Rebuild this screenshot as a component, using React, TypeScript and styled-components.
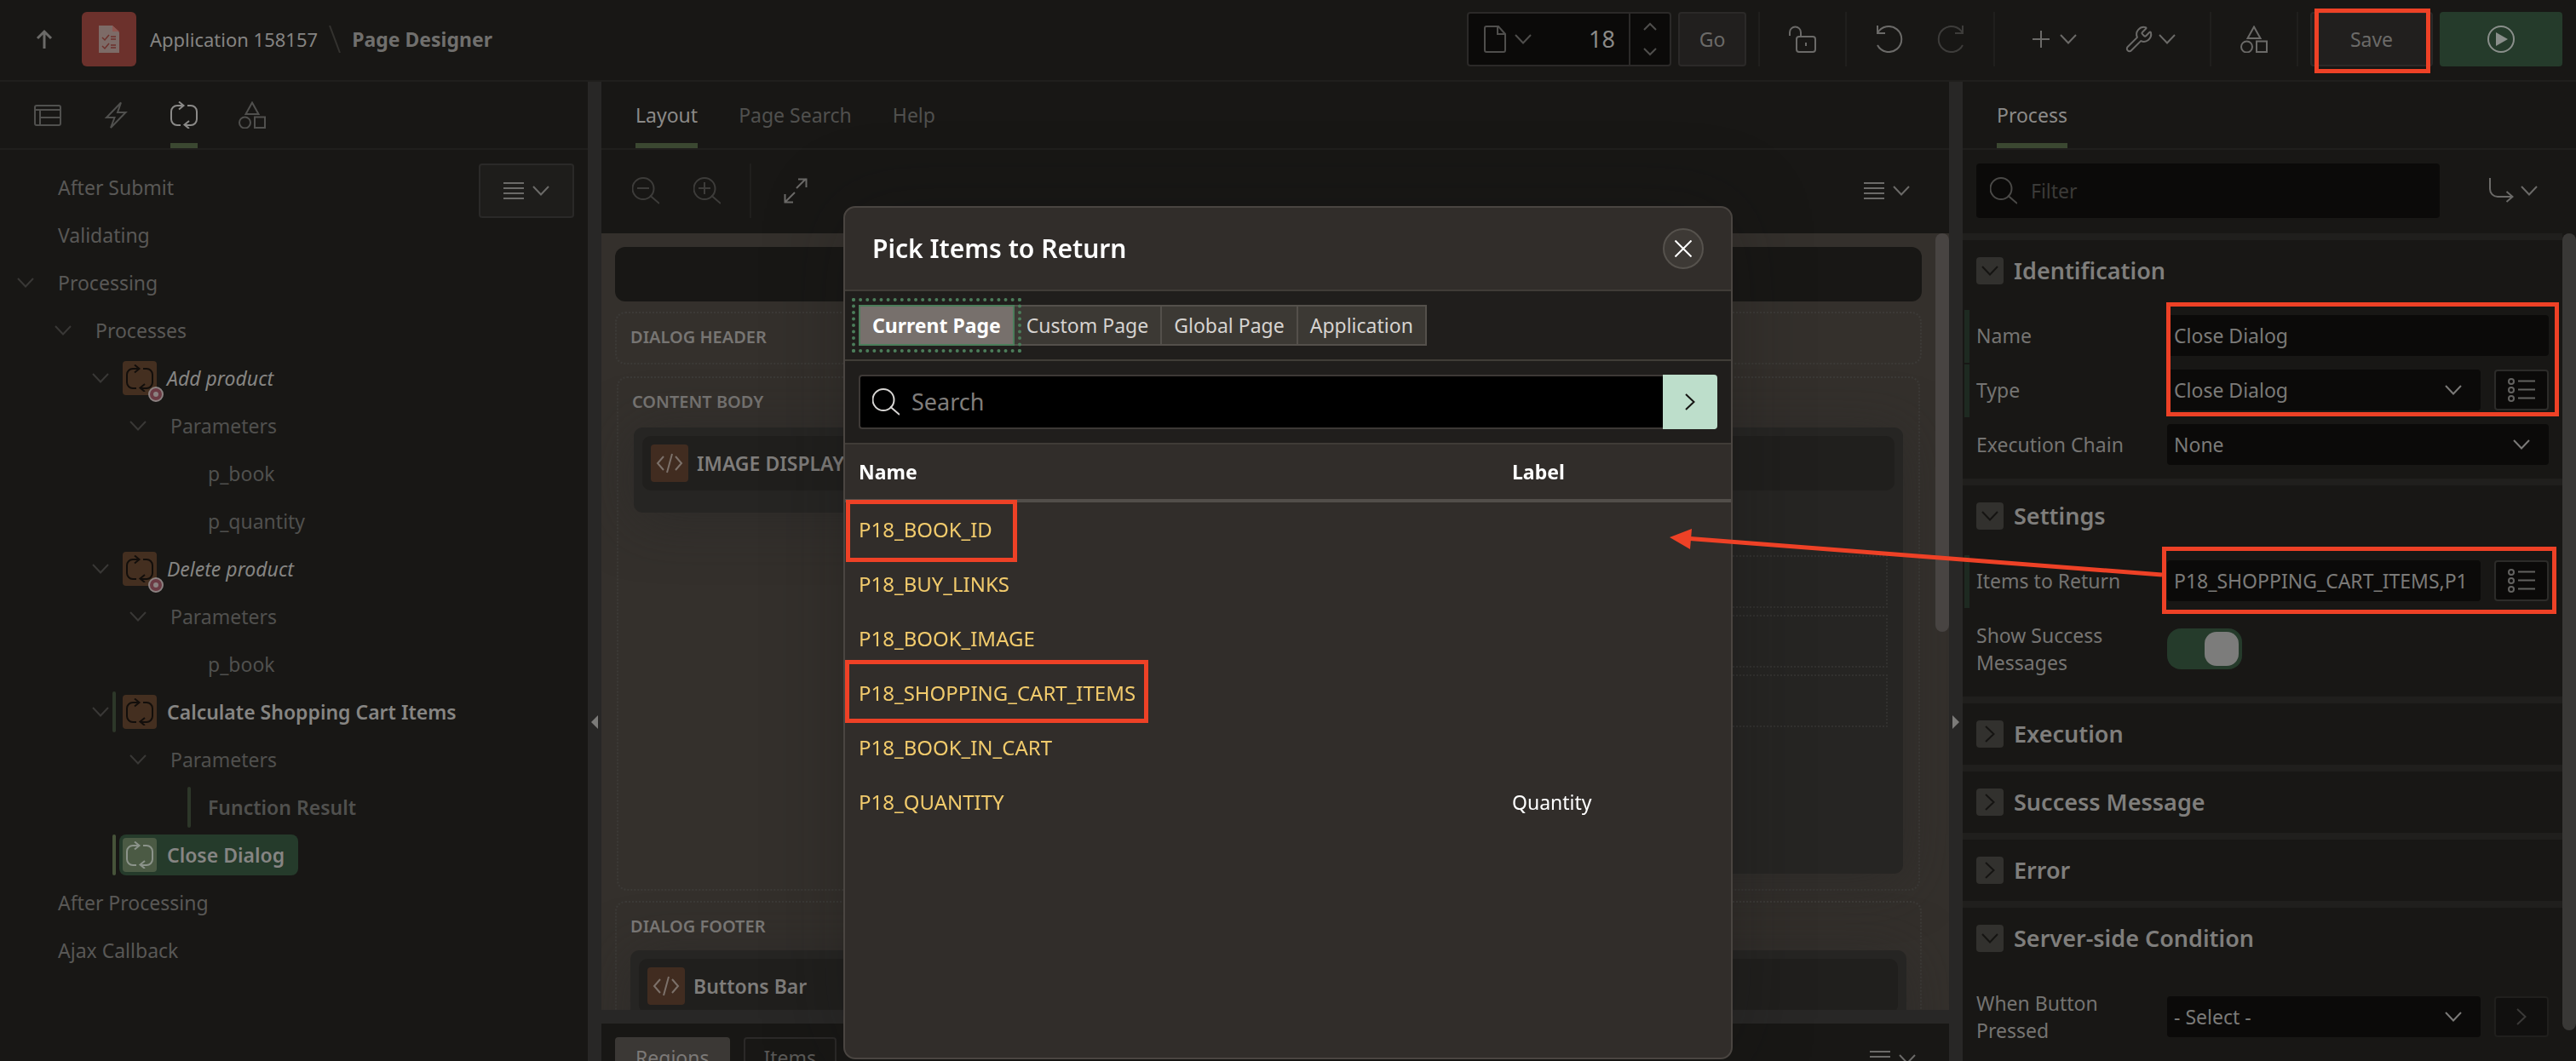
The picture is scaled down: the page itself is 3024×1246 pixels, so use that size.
import React from "react";
import styled, { createGlobalStyle, css } from "styled-components";
import { Wrench } from "lucide-react";

const c = {
  bg: "#181715",
  field: "#0b0a09",
  line: "#201f1d",
  raised: "#211f1e",
  border: "#2b2928",
  splitter: "#282726",
  canvas: "#34302c",
  text: "#858482",
  soft: "#6b6a68",
  dim: "#50504e",
  faint: "#3d3c3a",
  green: "#253b2b",
  tab: "#3b4831",
  bar: "#1e2a21",
  red: "#ee4126",
};

const Global = createGlobalStyle`
  *, *::before, *::after { box-sizing: border-box; }
  html, body { margin: 0; }
  body { background: ${c.bg}; overflow: hidden; }
  body, button, input, select {
    font-family: "Noto Sans", "Open Sans", sans-serif;
    font-size: 23px;
    line-height: 32px;
  }
  button, input, select { margin: 0; padding: 0; border: 0; background: none; color: inherit; }
  svg { display: block; flex: none; }
`;

/* ---------- icons ---------- */

type IconProps = { d: string; w?: number; h?: number; stroke?: number; children?: React.ReactNode };
const Icon = ({ d, w = 32, h = 32, stroke = 2, children }: IconProps) => (
  <svg width={w} height={h} viewBox={`0 0 ${w} ${h}`} fill="none" stroke="currentColor" strokeWidth={stroke} aria-hidden="true">
    <path d={d} />
    {children}
  </svg>
);
const Down = () => <Icon w={20} h={12} d="M1 1l9 9.5L19 1" />;
const Right = () => <Icon w={12} h={20} d="M1 1l9.5 9L1 19" />;
const SmallUp = () => <Icon w={16} h={10} d="M1 9l7-7 7 7" />;
const SmallDown = () => <Icon w={16} h={10} d="M1 1l7 7 7-7" />;
const Lines = () => <Icon w={24} h={20} d="M0 1h24M0 7h24M0 13h24M0 19h24" />;
const Search = () => <Icon d="M21 21.500L32 31"><circle cx="13" cy="13.500" r="12.500" /></Icon>;
const ZoomOut = () => <Icon d="M21 21.500L32 31M6 13h14"><circle cx="13" cy="13.500" r="12.500" /></Icon>;
const ZoomIn = () => <Icon d="M21 21.500L32 31M6 13h14M13 6v14"><circle cx="13" cy="13.500" r="12.500" /></Icon>;
const Expand = () => <Icon w={28} h={30} d="M15 12L26 1M17 1.500h9.500V11M13 17L2 28M1.500 19v9.500H11" />;
const Cycle = () => (
  <Icon d="M15 5H8a7 7 0 0 0-7 7v9a7 7 0 0 0 7 7h4M20 5h4a7 7 0 0 1 7 7v9a7 7 0 0 1-7 7h-7M10 0.500l5.500 4.500L10 9.500M22 23l-5.500 4.500L22 32" />
);
const Shapes = () => (
  <Icon d="M16 1.500L8.500 15h15zM19 18.500h12V31H19z"><circle cx="7.500" cy="25" r="6.500" /></Icon>
);
const Layout = () => <Icon h={26} d="M3 2h26a2 2 0 0 1 2 2v19a2 2 0 0 1-2 2H3a2 2 0 0 1-2-2V4a2 2 0 0 1 2-2zM1 7h30M7 7v18M7 16h24" />;
const Bolt = () => <Icon d="M22 1.500L5 19h9.500L10 31l17.500-18H18z" />;
const Up = () => <Icon w={20} h={24} stroke={3} d="M10 23V3M2 11l8-8 8 8" />;
const Lock = () => <Icon d="M1 12V8a6.500 6.500 0 0 1 13 0v5M12 13h16a3 3 0 0 1 3 3v12a3 3 0 0 1-3 3H12a3 3 0 0 1-3-3V16a3 3 0 0 1 3-3zM20 20v4" />;
const Undo = () => <Icon d="M2 0v9h9M2 9A15 15 0 1 1 2 23" />;
const Redo = () => <Icon d="M30 0v9h-9M30 9A15 15 0 1 0 30 23" />;
const Plus = () => <Icon w={20} h={20} d="M0 10h20M10 0v20" />;
const PageIcon = () => <Icon w={26} h={32} d="M3 1h14l8 9v19a2 2 0 0 1-2 2H3a2 2 0 0 1-2-2V3a2 2 0 0 1 2-2zM16 1v9h9" />;
const Play = () => (
  <Icon d="M16 1a15 15 0 1 1 0 30a15 15 0 1 1 0-30z"><path d="M10 8l14 8-14 8z" fill="currentColor" stroke="none" /></Icon>
);
const Branch = () => <Icon w={30} h={32} d="M2 1v13a9 9 0 0 0 9 9h17M21.500 17l7 6-7 6" />;
const List = () => (
  <Icon w={32} h={28} d="M12 3.500h20M12 13.500h20M12 23.500h20">
    <circle cx="4" cy="4" r="3" /><circle cx="4" cy="14" r="3" /><circle cx="4" cy="24" r="3" />
  </Icon>
);
const Code = () => <Icon w={32} h={24} d="M9 4L2 12l7 8M19 1l-6 22M23 4l7 8-7 8" />;
const Cross = () => <Icon w={20} h={20} d="M0.500 0.500l19 19M19.500 0.500l-19 19" />;
const Checklist = () => (
  <svg width="24" height="32" viewBox="0 0 24 32" aria-hidden="true">
    <path d="M0 0h16l8 8v24H0z" fill="#7d6b67" />
    <path d="M16 0v7h8" fill="#8f5650" />
    <path d="M4 14l3 3 5-6M14 13h6M14 16h6M4 24l3 3 5-6M14 23h6M14 26h6" fill="none" stroke="#6c312c" strokeWidth="1.500" />
  </svg>
);

/* ---------- shell ---------- */

const Page = styled.div`
  height: 100vh;
  display: grid;
  grid-template-rows: 96px minmax(0, 1fr);
  overflow: hidden;
  background: ${c.bg};
  color: ${c.text};
`;
const TopBar = styled.header`
  display: flex;
  align-items: center;
  justify-content: space-between;
  padding: 0 16px 2px 42px;
  border-bottom: 2px solid ${c.line};
`;
const Group = styled.div<{ $gap?: number }>`
  display: flex;
  align-items: center;
  gap: ${(p) => p.$gap ?? 0}px;
`;
const AppTile = styled.span`
  display: grid;
  place-items: center;
  width: 64px;
  height: 64px;
  margin-left: 34px;
  border-radius: 6px;
  background: #6c312c;
`;
const Crumb = styled.a`
  margin-left: 16px;
  font-size: 22px;
  color: ${c.text};
  text-decoration: none;
`;
const Slash = styled.span`
  margin: 0 13px;
  color: #33322f;
`;
const Current = styled.strong`
  color: #706f6d;
`;
const Ghost = styled.button<{ $w?: number; $off?: boolean; $gap?: number }>`
  display: flex;
  align-items: center;
  justify-content: center;
  gap: ${(p) => p.$gap ?? 12}px;
  width: ${(p) => p.$w ?? 72}px;
  height: 64px;
  color: ${(p) => (p.$off ? c.faint : c.soft)};
`;
const Solid = styled.button<{ $w: number; $green?: boolean }>`
  display: grid;
  place-items: center;
  width: ${(p) => p.$w}px;
  height: 64px;
  border-radius: 4px;
  border: 2px solid ${(p) => (p.$green ? c.green : c.border)};
  background: ${(p) => (p.$green ? c.green : c.raised)};
  color: ${(p) => (p.$green ? "#8a8f8b" : c.soft)};
`;
const Sep = styled.span`
  width: 2px;
  height: 64px;
  margin: 0 14px;
  background: ${c.line};
`;
const PageField = styled.div`
  display: flex;
  width: 240px;
  height: 64px;
  margin-right: 8px;
  border: 2px solid ${c.border};
  border-radius: 4px;
  background: ${c.field};
`;
const PageMenu = styled.button`
  display: flex;
  align-items: center;
  gap: 10px;
  padding-left: 18px;
  color: #4f4e4c;
`;
const PageInput = styled.input`
  flex: 1;
  min-width: 0;
  padding-right: 16px;
  text-align: right;
  font-size: 27px;
  color: #8b8a88;
`;
const Spin = styled.div`
  display: grid;
  width: 48px;
  border-left: 2px solid ${c.border};
  color: #4f4e4c;
  button { display: grid; place-items: center; }
`;

const Body = styled.main`
  display: grid;
  grid-template-columns: 690px 16px minmax(0, 1fr) 16px 720px;
  min-height: 0;
`;
const Splitter = styled.div`
  display: flex;
  align-items: center;
  justify-content: center;
  padding-top: 354px;
  height: 100%;
  background: ${c.splitter};
`;
const Handle = styled.button`
  color: #7c7b79;
`;
const SplitBar = ({ left, label }: { left?: boolean; label: string }) => (
  <Splitter>
    <Handle aria-label={label}>
      <svg width="8" height="16" viewBox="0 0 8 16" aria-hidden="true">
        <path d={left ? "M8 0v16L0 8z" : "M0 0v16l8-8z"} fill="currentColor" />
      </svg>
    </Handle>
  </Splitter>
);
const Pane = styled.section`
  display: flex;
  flex-direction: column;
  min-width: 0;
  min-height: 0;
`;
const Tabs = styled.nav`
  display: flex;
  flex: none;
  gap: 48px;
  height: 80px;
  padding: 0 40px;
  border-bottom: 2px solid ${c.line};
`;
const Tab = styled.button<{ $on?: boolean }>`
  display: flex;
  align-items: center;
  border-top: 6px solid transparent;
  border-bottom: 6px solid ${(p) => (p.$on ? c.tab : "transparent")};
  color: ${(p) => (p.$on ? "#8b8a88" : c.dim)};
`;

/* ---------- process tree ---------- */

const TreeArea = styled.div`
  position: relative;
  padding-top: 16px;
`;
const TreeMenu = styled.button`
  position: absolute;
  top: 16px;
  right: 16px;
  display: flex;
  align-items: center;
  justify-content: center;
  gap: 10px;
  width: 112px;
  height: 64px;
  border: 2px solid #2a2928;
  border-radius: 4px;
  background: #1e1d1b;
  color: ${c.soft};
`;
const TreeList = styled.ul`
  margin: 0;
  padding: 0;
  list-style: none;
`;
const TreeRow = styled.li<{ $level: number }>`
  display: flex;
  align-items: center;
  height: 56px;
  padding-left: ${(p) => p.$level * 44 + 20}px;
`;
const Toggle = styled.button`
  width: 36px;
  height: 32px;
  display: flex;
  align-items: center;
  color: #393836;
`;
const ChangeBar = styled.span<{ $on?: boolean; $bright?: boolean }>`
  width: 4px;
  height: 48px;
  margin-left: -12px;
  margin-right: 4px;
  border-radius: 2px;
  background: ${(p) => (p.$on ? (p.$bright ? "#465339" : "#2d3729") : "transparent")};
`;
const Node = styled.span<{ $tone?: "param" | "process" | "selected"; $italic?: boolean; $bold?: boolean }>`
  display: flex;
  align-items: center;
  gap: 12px;
  height: 48px;
  padding: 0 16px 0 ${(p) => (p.$tone === "process" || p.$tone === "selected" ? 4 : 16)}px;
  border-radius: 8px;
  white-space: nowrap;
  color: ${(p) => (p.$tone === "process" || p.$tone === "selected" ? "#868583" : p.$tone === "param" ? "#50504e" : "#595856")};
  ${(p) => p.$italic && css`font-style: italic;`}
  ${(p) => p.$bold && css`font-weight: 600;`}
  ${(p) => p.$tone === "selected" && css`background: ${c.green};`}
`;
const NodeIcon = styled.span<{ $sel?: boolean }>`
  position: relative;
  display: grid;
  place-items: center;
  width: 40px;
  height: 40px;
  border-radius: 4px;
  background: ${(p) => (p.$sel ? "#4b5a44" : "#442f20")};
  color: ${(p) => (p.$sel ? "#8b938a" : "#120e0b")};
`;
const Badge = styled.span`
  position: absolute;
  right: -8px;
  bottom: -8px;
  display: grid;
  place-items: center;
  width: 18px;
  height: 18px;
  border-radius: 50%;
  border: 2px solid #8b8180;
  background: #6b3a43;
  &::after { content: ""; width: 6px; height: 6px; border-radius: 50%; background: #8b8180; }
`;

type TreeItem = { label: string; level: number; open?: boolean; tone?: "param" | "process" | "selected"; badge?: boolean; bold?: boolean; changed?: boolean };
const tree: TreeItem[] = [
  { label: "After Submit", level: 0 },
  { label: "Validating", level: 0 },
  { label: "Processing", level: 0, open: true },
  { label: "Processes", level: 1, open: true },
  { label: "Add product", level: 2, open: true, tone: "process", badge: true },
  { label: "Parameters", level: 3, open: true, tone: "param" },
  { label: "p_book", level: 4, tone: "param" },
  { label: "p_quantity", level: 4, tone: "param" },
  { label: "Delete product", level: 2, open: true, tone: "process", badge: true },
  { label: "Parameters", level: 3, open: true, tone: "param" },
  { label: "p_book", level: 4, tone: "param" },
  { label: "Calculate Shopping Cart Items", level: 2, open: true, tone: "process", bold: true, changed: true },
  { label: "Parameters", level: 3, open: true, tone: "param" },
  { label: "Function Result", level: 4, tone: "param", bold: true, changed: true },
  { label: "Close Dialog", level: 2, tone: "selected", bold: true, changed: true },
  { label: "After Processing", level: 0 },
  { label: "Ajax Callback", level: 0 },
];

const Tree = () => (
  <TreeArea>
    <TreeList>
      {tree.map((n, i) => (
        <TreeRow key={i} $level={n.level}>
          <Toggle as={n.open ? "button" : "span"} aria-label={n.open ? `Collapse ${n.label}` : undefined}>{n.open && <Down />}</Toggle>
          <ChangeBar $on={n.changed} $bright={n.tone === "selected"} />
          <Node $tone={n.tone} $italic={n.badge} $bold={n.bold}>
            {(n.tone === "process" || n.tone === "selected") && (
              <NodeIcon $sel={n.tone === "selected"}><Cycle />{n.badge && <Badge />}</NodeIcon>
            )}
            {n.label}
          </Node>
        </TreeRow>
      ))}
    </TreeList>
    <TreeMenu aria-label="Tree menu"><Lines /><Down /></TreeMenu>
  </TreeArea>
);

/* ---------- layout canvas ---------- */

const Tools = styled.div`
  display: flex;
  flex: none;
  align-items: center;
  height: 98px;
  padding: 0 46px 2px 36px;
  color: ${c.soft};
`;
const Tool = styled.button<{ $dim?: boolean; $w?: number }>`
  display: flex;
  align-items: center;
  justify-content: flex-start;
  width: ${(p) => p.$w ?? 72}px;
  color: ${(p) => (p.$dim ? c.faint : c.soft)};
`;
const ToolSep = styled.span`
  width: 2px;
  height: 64px;
  margin-right: 38px;
  background: ${c.line};
`;
const MenuTool = styled.button`
  display: flex;
  align-items: center;
  gap: 10px;
  margin-left: auto;
  color: ${c.soft};
`;
const CanvasWrap = styled.div`
  display: flex;
  flex: 1;
  min-height: 0;
  overflow: hidden;
  background: ${c.canvas};
`;
const Canvas = styled.div`
  display: flex;
  flex-direction: column;
  flex: 1;
  min-width: 0;
  padding: 16px 16px 0;
`;
const Scroller = styled.div<{ $h: number; $color: string }>`
  flex: none;
  width: 16px;
  height: ${(p) => p.$h}px;
  border-radius: 8px;
  background: ${(p) => p.$color};
`;
const PageStrip = styled.div`
  flex: none;
  height: 64px;
  border-radius: 12px;
  background: ${c.bg};
`;
const Slot = styled.section<{ $h: number; $inset?: boolean }>`
  flex: none;
  height: ${(p) => p.$h}px;
  margin: ${(p) => (p.$inset ? "14px 2px 0" : "12px 0 0")};
  padding: 12px 16px 0;
  border: 2px dotted #3c3a37;
  border-radius: 12px;
`;
const SlotTitle = styled.h3`
  margin: 0;
  font-size: 20px;
  line-height: 32px;
  font-weight: 600;
  color: #777573;
`;
const Cards = styled.div`
  display: grid;
  grid-template-columns: 1fr 1fr;
  align-items: start;
  gap: 16px;
  margin: 14px 2px 0;
`;
const Card = styled.div<{ $h: number }>`
  height: ${(p) => p.$h}px;
  padding: 10px 10px 0;
  border-radius: 10px;
  background: #262523;
  box-shadow: 0 8px 64px rgba(38, 38, 37, 0.5);
`;
const CardHead = styled.div`
  display: flex;
  align-items: center;
  gap: 10px;
  height: 64px;
  padding: 0 10px;
  border-radius: 10px;
  background: #201f1d;
  font-weight: 600;
  color: #7f7d7b;
`;
const CodeTile = styled.span`
  display: grid;
  place-items: center;
  width: 44px;
  height: 44px;
  border-radius: 4px;
  background: #412c20;
  color: #7c716a;
`;
const DropZones = styled.div`
  display: grid;
  gap: 8px;
  margin: 76px 8px 0 0;
`;
const DropZone = styled.div`
  height: 62px;
  border: 2px dotted #32312f;
`;
const FootCard = styled(Card)`
  margin-top: 12px;
`;
const Gallery = styled.div`
  display: flex;
  flex: none;
  align-items: flex-start;
  height: 44px;
  padding: 16px 39px 0 16px;
  overflow: hidden;
  gap: 16px;
`;
const GalleryMenu = styled(MenuTool)`
  margin-top: 16px;
`;
const HSplit = styled.div`
  flex: none;
  height: 16px;
  background: ${c.splitter};
`;
const GalleryTab = styled.button<{ $on?: boolean }>`
  height: 48px;
  padding: 0 22px;
  border: 2px solid ${(p) => (p.$on ? "#3b3835" : c.border)};
  border-radius: 4px 4px 0 0;
  background: ${(p) => (p.$on ? "#3b3835" : c.bg)};
  color: ${(p) => (p.$on ? "#7b7977" : "#5a5957")};
`;

/* ---------- property editor ---------- */

const FilterRow = styled.div`
  display: flex;
  flex: none;
  align-items: center;
  gap: 30px;
  height: 98px;
  padding: 0 16px 2px;
`;
const FilterBox = styled.label`
  display: flex;
  align-items: center;
  gap: 16px;
  width: 544px;
  height: 64px;
  padding: 0 16px;
  border-radius: 4px;
  background: ${c.field};
  color: #4a4947;
`;
const FilterInput = styled.input`
  flex: 1;
  min-width: 0;
  &::placeholder { color: #3b3a38; opacity: 1; }
`;
const PropsBody = styled.div`
  display: flex;
  flex: 1;
  min-height: 0;
`;
const PropsList = styled.div`
  flex: 1;
  min-width: 0;
`;
const SectionBox = styled.section<{ $open?: boolean }>`
  border-top: 8px solid ${c.line};
  padding-bottom: ${(p) => (p.$open ? 8 : 0)}px;
`;
const SectionHead = styled.h2<{ $open?: boolean }>`
  display: flex;
  align-items: center;
  gap: 12px;
  height: ${(p) => (p.$open ? 80 : 72)}px;
  margin: 0;
  padding: 0 16px ${(p) => (p.$open ? 8 : 0)}px;
  font-size: 27px;
  font-weight: 600;
  color: #7f7e7c;
`;
const SectionToggle = styled.button`
  display: grid;
  place-items: center;
  width: 32px;
  height: 32px;
  border-radius: 4px;
  background: #32312e;
  color: #151412;
`;
const PropGroup = styled.div`
  position: relative;
`;
const PropRow = styled.div<{ $changed?: boolean; $tall?: boolean }>`
  display: grid;
  grid-template-columns: 224px minmax(0, 1fr) auto;
  align-items: center;
  min-height: ${(p) => (p.$tall ? 96 : 64)}px;
  padding: 0 16px 0 8px;
  border-left: 8px solid transparent;
  ${(p) =>
    p.$changed &&
    css`
      background: linear-gradient(${c.bar}, ${c.bar}) -6px 2px / 6px 62px no-repeat border-box;
      background-origin: padding-box;
    `}
`;
const PropLabel = styled.label`
  color: #757472;
  white-space: nowrap;
`;
const WrapLabel = styled(PropLabel)`
  padding-right: 60px;
  white-space: normal;
`;
const TextField = styled.input`
  width: 100%;
  height: 48px;
  padding: 0 8px;
  border-radius: 4px;
  background: ${c.field};
  color: #7b7a78;
`;
const SelectBox = styled.div`
  position: relative;
  color: #7b7a78;
  svg { position: absolute; right: 22px; top: 18px; pointer-events: none; }
`;
const SelectField = styled.select`
  width: 100%;
  height: 48px;
  padding: 0 8px;
  border-radius: 4px;
  background: ${c.field};
  appearance: none;
`;
const SideButton = styled.button<{ $off?: boolean }>`
  display: grid;
  place-items: center;
  width: 64px;
  height: 48px;
  margin-left: 16px;
  border: 2px solid ${(p) => (p.$off ? "#201f1d" : "#2c2b29")};
  border-radius: 4px;
  background: ${(p) => (p.$off ? "#11100f" : c.field)};
  color: ${(p) => (p.$off ? "#3b3a38" : "#636260")};
`;
const Switch = styled.input`
  appearance: none;
  justify-self: start;
  width: 88px;
  height: 48px;
  padding: 4px;
  border-radius: 16px;
  background: ${c.green};
  &::before {
    content: "";
    display: block;
    width: 40px;
    height: 40px;
    margin-left: 40px;
    border-radius: 14px;
    background: #7c7c7b;
  }
`;

/* ---------- callouts ---------- */

const Callout = styled.span<{ $t: number; $r: number; $b: number; $l: number }>`
  position: absolute;
  top: ${(p) => p.$t}px;
  right: ${(p) => p.$r}px;
  bottom: ${(p) => p.$b}px;
  left: ${(p) => p.$l}px;
  border: 5px solid ${c.red};
  pointer-events: none;
`;
const Anchor = styled.div`
  position: relative;
`;
const ArrowLayer = styled.svg`
  position: absolute;
  z-index: 30;
  top: -30px;
  right: 470px;
  pointer-events: none;
`;

/* ---------- dialog ---------- */

const Overlay = styled.div`
  position: fixed;
  inset: 0;
  z-index: 20;
  display: flex;
  justify-content: center;
  padding: 242px 0 2px;
`;
const Dialog = styled.div`
  display: flex;
  flex-direction: column;
  width: 1044px;
  border: 2px solid #4a4541;
  border-radius: 14px;
  background: #312d2a;
  box-shadow: 0 0 96px rgba(20, 20, 20, 0.3);
  color: #fff;
`;
const DialogHead = styled.div`
  display: flex;
  align-items: center;
  justify-content: space-between;
  height: 98px;
  padding: 0 32px;
  border-bottom: 2px solid #403c37;
`;
const DialogTitle = styled.h1`
  margin: 0;
  font-size: 30px;
  line-height: 40px;
  font-weight: 600;
`;
const Close = styled.button`
  display: grid;
  place-items: center;
  width: 48px;
  height: 48px;
  border: 2px solid #56524d;
  border-radius: 50%;
  background: #3d3935;
`;
const Scope = styled.div`
  display: flex;
  height: 82px;
  padding: 16px;
  border-bottom: 2px solid #403d37;
  background: #201e1c;
`;
const ScopeTab = styled.button<{ $on?: boolean }>`
  height: 48px;
  padding: 0 14px;
  border: 2px solid #54504b;
  border-left-width: 0;
  background: #3c3934;
  color: #d6d3d0;
  ${(p) =>
    p.$on &&
    css`
      border: 2px solid #4b7d5a;
      background: #77706c;
      color: #fff;
      font-weight: 700;
      outline: 4px dotted #4b7d5a;
      outline-offset: 4px;
      z-index: 1;
    `}
`;
const SearchRow = styled.div`
  display: flex;
  height: 98px;
  padding: 16px;
  border-bottom: 2px solid #403c37;
  background: #201e1c;
`;
const SearchBox = styled.label`
  display: flex;
  flex: 1;
  align-items: center;
  gap: 14px;
  height: 64px;
  padding: 0 14px;
  border: 2px solid #3d3936;
  border-right: 0;
  border-radius: 4px 0 0 4px;
  background: #000;
  color: #d9d7d5;
`;
const SearchInput = styled.input`
  flex: 1;
  font-size: 27px;
  &::placeholder { color: #807e7c; opacity: 1; }
`;
const Go = styled.button`
  display: grid;
  place-items: center;
  width: 64px;
  height: 64px;
  border-radius: 0 4px 4px 0;
  background: #bddecb;
  color: #161513;
`;
const Table = styled.table`
  width: 100%;
  border-collapse: separate;
  border-spacing: 0;
  table-layout: fixed;
  th, td { height: 64px; padding: 0 16px; text-align: left; }
  th { height: 68px; font-weight: 700; border-bottom: 4px solid #524e4a; }
  th:first-child { width: 767px; }
`;
const ItemLink = styled.a`
  font-size: 24px;
  color: #f2cb6c;
  text-decoration: none;
`;

const items: { name: string; label?: string; mark?: [number, number, number, number] }[] = [
  { name: "P18_BOOK_ID", mark: [-3, 565, -6, 1] },
  { name: "P18_BUY_LINKS" },
  { name: "P18_BOOK_IMAGE" },
  { name: "P18_SHOPPING_CART_ITEMS", mark: [-7, 411, -3, 0] },
  { name: "P18_BOOK_IN_CART" },
  { name: "P18_QUANTITY", label: "Quantity" },
];
const NameCell = styled.td`
  position: relative;
`;

const PickDialog = () => (
  <Overlay>
    <Dialog role="dialog" aria-labelledby="pick-title">
      <DialogHead>
        <DialogTitle id="pick-title">Pick Items to Return</DialogTitle>
        <Close aria-label="Close"><Cross /></Close>
      </DialogHead>
      <Scope>
        <ScopeTab $on>Current Page</ScopeTab>
        <ScopeTab>Custom Page</ScopeTab>
        <ScopeTab>Global Page</ScopeTab>
        <ScopeTab>Application</ScopeTab>
      </Scope>
      <SearchRow>
        <SearchBox><Search /><SearchInput aria-label="Search" placeholder="Search" /></SearchBox>
        <Go aria-label="Search"><Right /></Go>
      </SearchRow>
      <Table>
        <thead><tr><th>Name</th><th>Label</th></tr></thead>
        <tbody>
          {items.map((r) => (
            <tr key={r.name}>
              <NameCell>
                <ItemLink href="#">{r.name}</ItemLink>
                {r.mark && <Callout $t={r.mark[0]} $r={r.mark[1]} $b={r.mark[2]} $l={r.mark[3]} />}
              </NameCell>
              <td>{r.label}</td>
            </tr>
          ))}
        </tbody>
      </Table>
    </Dialog>
  </Overlay>
);

const Section = ({ title, open, children }: { title: string; open?: boolean; children?: React.ReactNode }) => (
  <SectionBox $open={open}>
    <SectionHead $open={open}>
      <SectionToggle aria-label={`Toggle ${title}`}>{open ? <Down /> : <Right />}</SectionToggle>
      {title}
    </SectionHead>
    {children}
  </SectionBox>
);

const Select = ({ id, value }: { id: string; value: string }) => (
  <SelectBox>
    <SelectField id={id} defaultValue={value}><option>{value}</option></SelectField>
    <Down />
  </SelectBox>
);

export default function App() {
  return (
    <>
      <Global />
      <Page>
        <TopBar>
          <Group>
            <Ghost as="a" href="#" $w={20} aria-label="Up"><Up /></Ghost>
            <AppTile><Checklist /></AppTile>
            <Crumb href="#">Application 158157</Crumb>
            <Slash><Icon w={14} h={32} d="M1 0l12 32" /></Slash>
            <Current>Page Designer</Current>
          </Group>
          <Group>
            <PageField>
              <PageMenu aria-label="Page finder"><PageIcon /><Down /></PageMenu>
              <PageInput aria-label="Page number" defaultValue="18" />
              <Spin>
                <button aria-label="Next page"><SmallUp /></button>
                <button aria-label="Previous page"><SmallDown /></button>
              </Spin>
            </PageField>
            <Solid $w={80}>Go</Solid>
            <Sep />
            <Ghost aria-label="Lock"><Lock /></Ghost>
            <Sep />
            <Ghost aria-label="Undo"><Undo /></Ghost>
            <Ghost aria-label="Redo" $off><Redo /></Ghost>
            <Sep />
            <Ghost $w={112} aria-label="Create"><Plus /><Down /></Ghost>
            <Ghost $w={112} $gap={6} aria-label="Utilities"><Wrench size={34} strokeWidth={1.4} /><Down /></Ghost>
            <Sep />
            <Ghost aria-label="Shared components"><Shapes /></Ghost>
            <Sep />
            <Group $gap={8}>
              <Anchor>
                <Solid $w={144}>Save</Solid>
                <Callout $t={-4} $r={3} $b={-8} $l={5} />
              </Anchor>
              <Solid $w={144} $green aria-label="Save and run"><Play /></Solid>
            </Group>
          </Group>
        </TopBar>
        <Body>
          <Pane>
            <Tabs>
              <Tab aria-label="Rendering"><Layout /></Tab>
              <Tab aria-label="Dynamic actions"><Bolt /></Tab>
              <Tab aria-label="Processing" $on><Cycle /></Tab>
              <Tab aria-label="Shared components"><Shapes /></Tab>
            </Tabs>
            <Tree />
          </Pane>
          <SplitBar left label="Collapse left pane" />
          <Pane>
            <Tabs>
              <Tab $on>Layout</Tab>
              <Tab>Page Search</Tab>
              <Tab>Help</Tab>
            </Tabs>
            <Tools>
              <Tool $dim aria-label="Zoom out"><ZoomOut /></Tool>
              <Tool $dim $w={66} aria-label="Zoom in"><ZoomIn /></Tool>
              <ToolSep />
              <Tool aria-label="Expand"><Expand /></Tool>
              <MenuTool aria-label="Layout menu"><Lines /><Down /></MenuTool>
            </Tools>
            <CanvasWrap>
              <Canvas>
                <PageStrip />
                <Slot $h={62}><SlotTitle>DIALOG HEADER</SlotTitle></Slot>
                <Slot $h={604} $inset>
                  <SlotTitle>CONTENT BODY</SlotTitle>
                  <Cards>
                    <Card $h={100}><CardHead><CodeTile><Code /></CodeTile>IMAGE DISPLAY</CardHead></Card>
                    <Card $h={524}>
                      <CardHead />
                      <DropZones><DropZone /><DropZone /><DropZone /></DropZones>
                    </Card>
                  </Cards>
                </Slot>
                <Slot $h={200}>
                  <SlotTitle>DIALOG FOOTER</SlotTitle>
                  <FootCard $h={140}><CardHead><CodeTile><Code /></CodeTile>Buttons Bar</CardHead></FootCard>
                </Slot>
              </Canvas>
              <Scroller $h={468} $color="#484442" />
            </CanvasWrap>
            <HSplit />
            <Gallery>
              <GalleryTab $on>Regions</GalleryTab>
              <GalleryTab>Items</GalleryTab>
              <GalleryMenu aria-label="Gallery menu"><Lines /><Down /></GalleryMenu>
            </Gallery>
          </Pane>
          <SplitBar label="Collapse right pane" />
          <Pane>
            <Tabs><Tab $on>Process</Tab></Tabs>
            <FilterRow>
              <FilterBox><Search /><FilterInput aria-label="Filter" placeholder="Filter" /></FilterBox>
              <Ghost $w={112} $gap={8} aria-label="Go to group"><Branch /><Down /></Ghost>
            </FilterRow>
            <PropsBody>
              <PropsList>
                <Section title="Identification" open>
                  <PropGroup>
                    <PropRow $changed>
                      <PropLabel htmlFor="name">Name</PropLabel>
                      <TextField id="name" defaultValue="Close Dialog" />
                    </PropRow>
                    <PropRow $changed>
                      <PropLabel htmlFor="type">Type</PropLabel>
                      <Select id="type" value="Close Dialog" />
                      <SideButton aria-label="Pick type"><List /></SideButton>
                    </PropRow>
                    <Callout $t={-7} $r={4} $b={1} $l={239} />
                  </PropGroup>
                  <PropRow>
                    <PropLabel htmlFor="chain">Execution Chain</PropLabel>
                    <Select id="chain" value="None" />
                  </PropRow>
                </Section>
                <Section title="Settings" open>
                  <PropGroup>
                    <PropRow $changed>
                      <PropLabel htmlFor="items">Items to Return</PropLabel>
                      <TextField id="items" defaultValue="P18_SHOPPING_CART_ITEMS,P1" />
                      <SideButton aria-label="Pick items"><List /></SideButton>
                    </PropRow>
                    <Callout $t={-8} $r={7} $b={-7} $l={234} />
                    <ArrowLayer width="578" height="70" viewBox="0 0 578 70" aria-hidden="true">
                      <path d="M24 12.500L578 55" stroke={c.red} strokeWidth="5" />
                      <path d="M0 11L26 1l-2 24z" fill={c.red} />
                    </ArrowLayer>
                  </PropGroup>
                  <PropRow $tall>
                    <WrapLabel htmlFor="success">Show Success Messages</WrapLabel>
                    <Switch id="success" type="checkbox" role="switch" defaultChecked />
                  </PropRow>
                </Section>
                <Section title="Execution" />
                <Section title="Success Message" />
                <Section title="Error" />
                <Section title="Server-side Condition" open>
                  <PropRow $tall>
                    <WrapLabel htmlFor="when">When Button Pressed</WrapLabel>
                    <Select id="when" value="- Select -" />
                    <SideButton $off aria-label="Go to button"><Right /></SideButton>
                  </PropRow>
                </Section>
              </PropsList>
              <Scroller $h={936} $color="#393836" />
            </PropsBody>
          </Pane>
        </Body>
      </Page>
      <PickDialog />
    </>
  );
}
